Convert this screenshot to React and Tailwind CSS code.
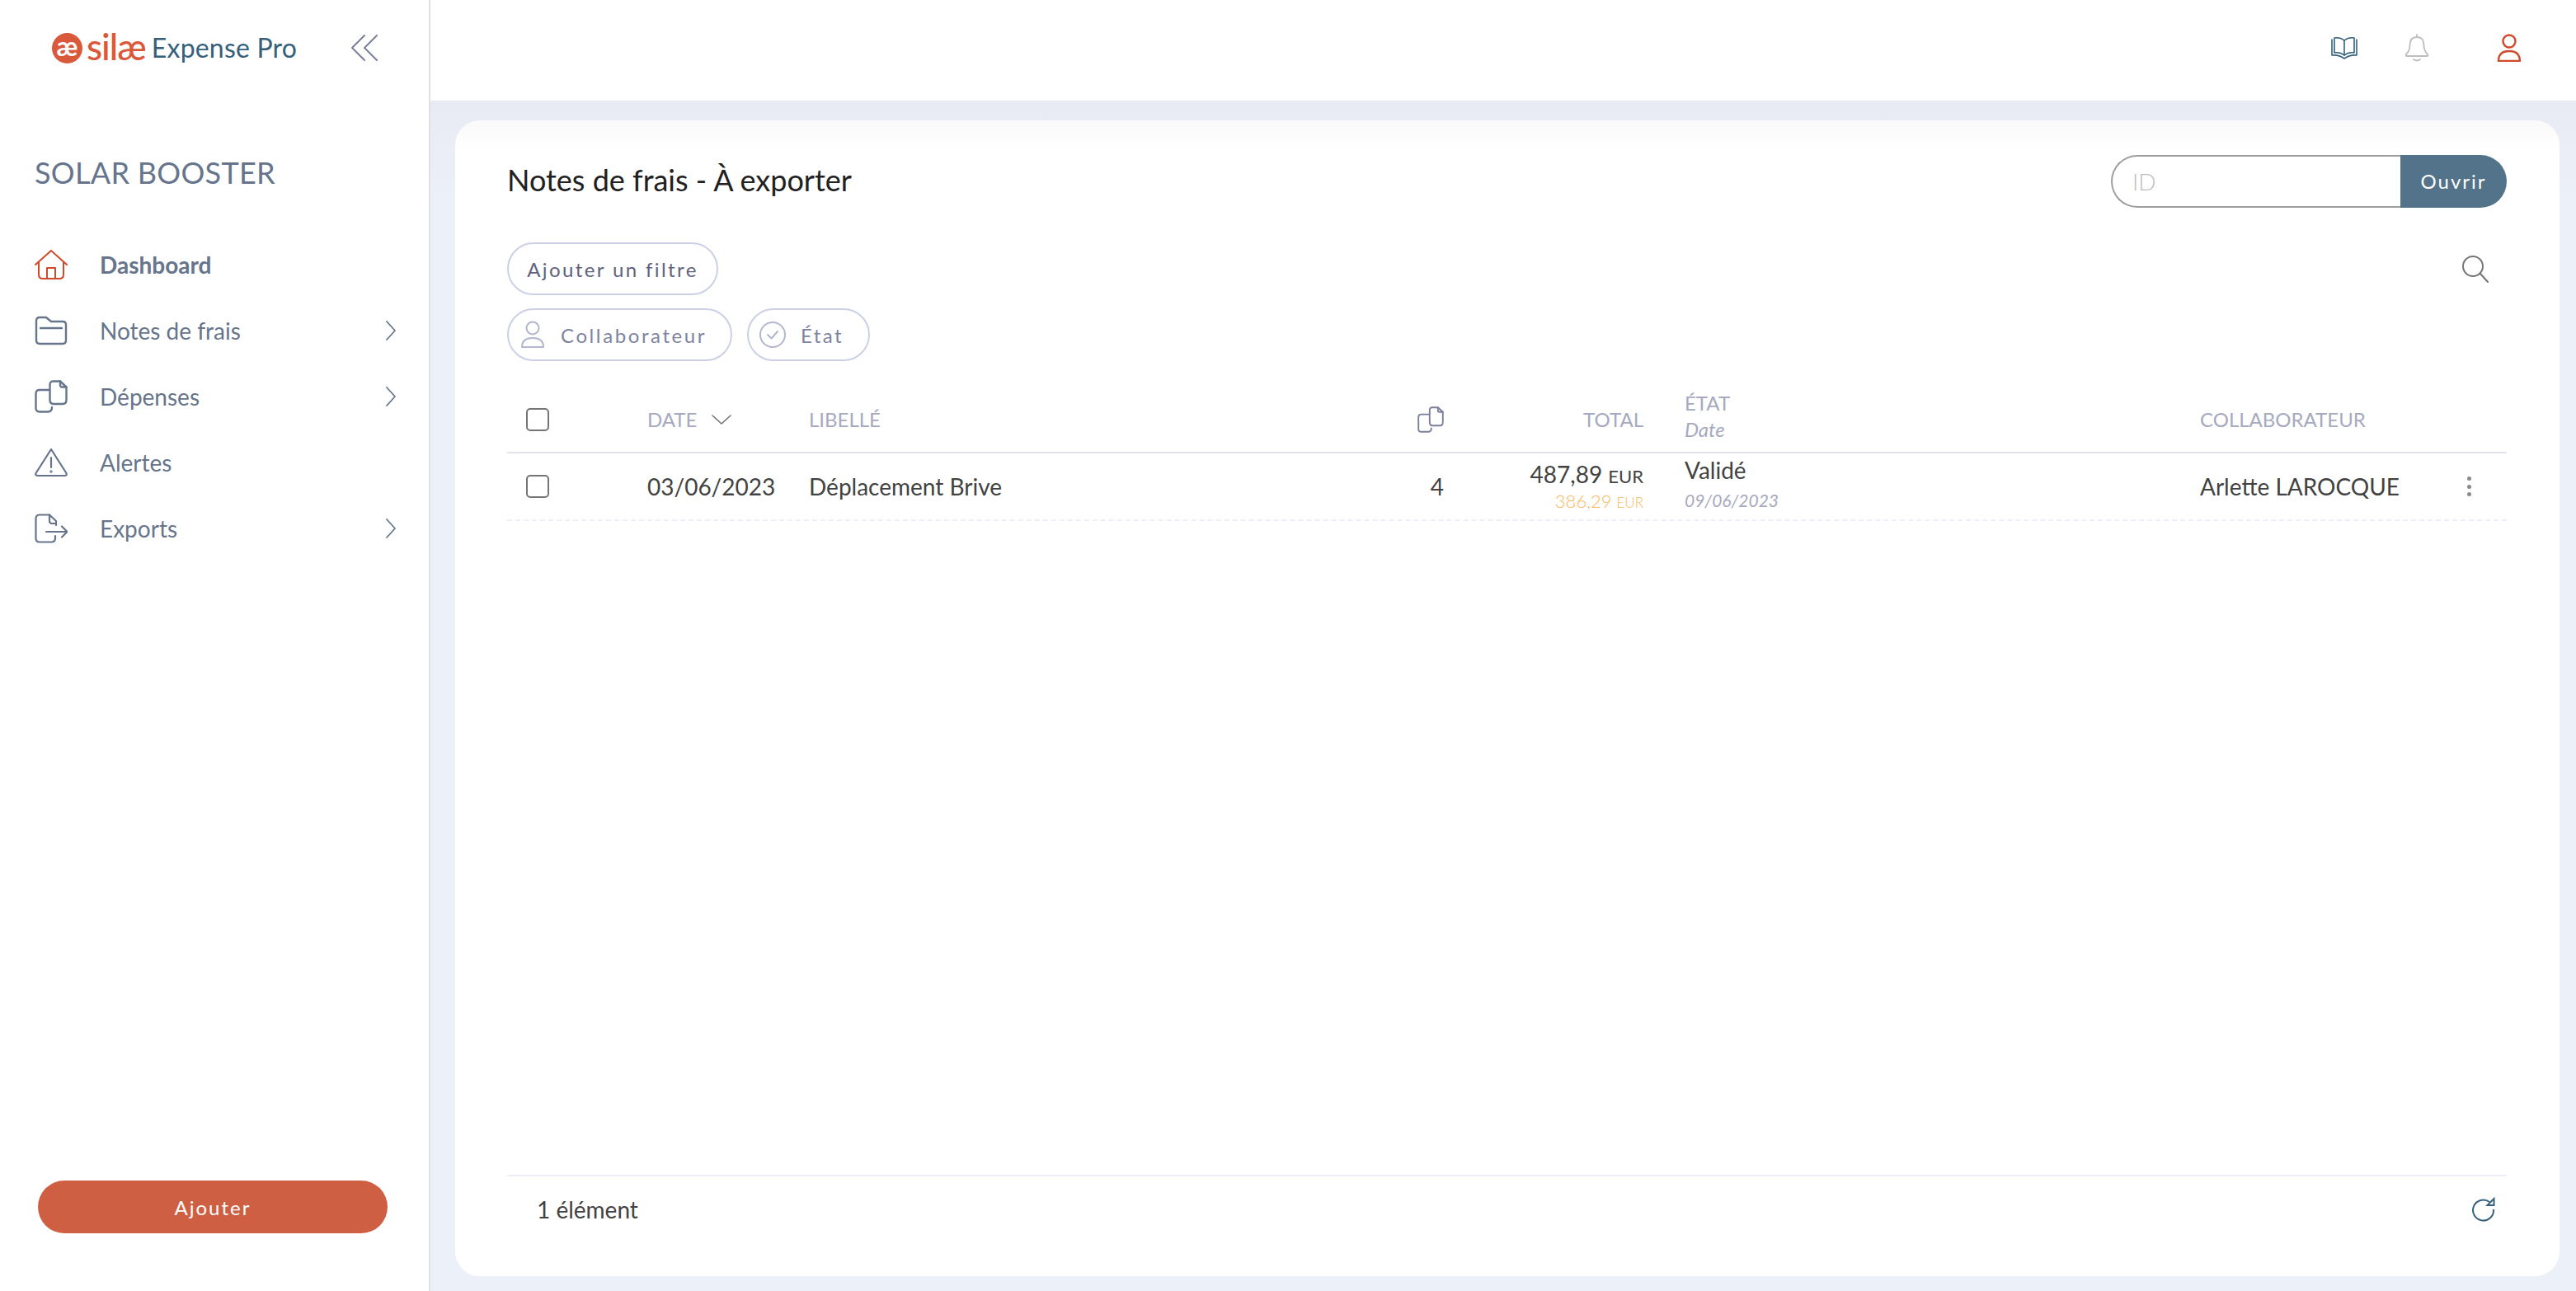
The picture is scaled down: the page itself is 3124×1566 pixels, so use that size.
const S = { fill: "none", stroke: "currentColor", strokeWidth: 2, strokeLinecap: "round", strokeLinejoin: "round" };

const Home = () => (
  <svg width="40" height="36" viewBox="0 0 40 36" {...S}>
    <path d="M1 18 L20 1 L39 18" />
    <path d="M5 15 V30 Q5 35 10 35 H30 Q35 35 35 30 V15" />
    <path d="M15 35 V22 H25 V35" />
  </svg>
);
const Folder = () => (
  <svg width="40" height="36" viewBox="0 0 40 36" {...S} strokeWidth="2.4">
    <path d="M2 30 V6 Q2 2 6 2 H14 L20 7 H34 Q38 7 38 11 V30 Q38 34 34 34 H6 Q2 34 2 30 Z" />
    <path d="M7 15 H33" />
  </svg>
);
const Copies = ({ w = 40, h = 40 }) => (
  <svg width={w} height={h} viewBox="0 0 40 40" {...S} strokeWidth="2.4">
    <path d="M22 1.5 H31 L38.5 8.5 V24 Q38.5 29 34 29 H23 Q18.5 29 18.5 24 V6 Q18.5 1.5 22 1.5 Z" />
    <path d="M31 1.5 V6 Q31 8.5 33.5 8.5 H38.5" />
    <path d="M17 12 H6 Q1.5 12 1.5 16.5 V34 Q1.5 38.5 6 38.5 H16 Q21 38.5 21 33" />
  </svg>
);
const Warn = () => (
  <svg width="40" height="36" viewBox="0 0 40 36" {...S} strokeWidth="2.2">
    <path d="M20 2 L38.5 31 Q39.5 34 36 34 H4 Q0.5 34 1.5 31 Z" />
    <path d="M20 12 V24" />
    <circle cx="20" cy="29" r="0.6" />
  </svg>
);
const Export = () => (
  <svg width="40" height="36" viewBox="0 0 40 36" {...S} strokeWidth="2.2">
    <path d="M18 1.5 H6 Q1.5 1.5 1.5 6 V30 Q1.5 34.5 6 34.5 H20 Q25 34.5 25 30 V27" />
    <path d="M18 1.5 L26 9 V14 M18 1.5 V9 Q18 12 21 12 H26" />
    <path d="M14 22 H39 M33 15.5 L39.5 22 L33 28.5" />
  </svg>
);
const ChevronR = () => (
  <svg className="text-[#66758c]" width="12" height="24" viewBox="0 0 12 24" {...S} strokeWidth="1.8"><path d="M1 1 L11 12 L1 23" /></svg>
);

const NavItem = ({ icon, label, active, chevron }) => (
  <div className="flex items-center h-20 pl-[42px] pr-[40px]">
    <span className={active ? "w-10 flex justify-center text-[#cf4a2a]" : "w-10 flex justify-center text-[#66758c]"}>{icon}</span>
    <span className={active ? "ml-[39px] flex-1 text-[28px] font-bold text-[#66758c]" : "ml-[39px] flex-1 text-[28px] text-[#66758c]"}>{label}</span>
    {chevron && <ChevronR />}
  </div>
);

const Head = ({ className = "", children }) => (
  <div className={"text-[24px] leading-[32px] text-[#a6a9bf] " + className}>{children}</div>
);

export default function App() {
  return (
    <div className="flex w-[3124px] h-[1566px] overflow-hidden bg-white font-[Lato,sans-serif]">
      {/* Sidebar */}
      <aside className="w-[522px] h-full flex flex-col border-r-2 border-[#e0e0e0] bg-white">
        <div className="flex items-center h-[116px] pl-[63px]">
          <span className="w-[37px] h-[37px] rounded-full bg-[#d9593a] text-white flex items-center justify-center text-[32px] leading-none font-bold pb-[4px]">æ</span>
          <span className="ml-[5px] text-[44px] leading-none text-[#d9593a] pb-[5px] font-medium tracking-[-1px]">silæ</span>
          <span className="ml-[7px] text-[32px] tracking-[0.2px] leading-none text-[#34607c] whitespace-nowrap">Expense Pro</span>
          <span className="ml-[66px] text-[#7b7f9c]">
            <svg width="32" height="32" viewBox="0 0 32 32" {...S}><path d="M16 1 L1 16 L16 31 M31 1 L16 16 L31 31" /></svg>
          </span>
        </div>
        <div className="pl-[42px] mt-[68px] text-[36px] leading-[50px] tracking-[0.3px] text-[#66758c]">SOLAR BOOSTER</div>
        <nav className="mt-[47px] flex flex-col">
          <NavItem icon={<Home />} label="Dashboard" active />
          <NavItem icon={<Folder />} label="Notes de frais" chevron />
          <NavItem icon={<Copies />} label="Dépenses" chevron />
          <NavItem icon={<Warn />} label="Alertes" />
          <NavItem icon={<Export />} label="Exports" chevron />
        </nav>
        <div className="mt-auto pl-[46px] pb-[70px]">
          <button className="w-[424px] h-[64px] pt-[2px] rounded-full bg-[#cf5f42] text-white text-[24px] tracking-[2px]">Ajouter</button>
        </div>
      </aside>

      {/* Main */}
      <main className="flex-1 flex flex-col min-w-0 bg-linear-to-b from-[#e5e6f0] to-[#ecf0f8] to-[16%]">
        <header className="h-[122px] bg-white flex items-center justify-end shrink-0 relative">
          <div className="flex items-center pr-[66px] pb-[6px]">
            <span className="text-[#34607c]">
              <svg width="34" height="28" viewBox="0 0 34 28" {...S} strokeWidth="1.6">
                <path d="M2 4 V23 Q10 22 17 27 Q24 22 32 23 V4" />
                <path d="M5 2 Q12 1 17 5 Q22 1 29 2 V20 Q22 19 17 23 Q12 19 5 20 Z" />
                <path d="M17 5 V23" />
              </svg>
            </span>
            <span className="ml-[56px] text-[#bdbdbd]">
              <svg width="30" height="34" viewBox="0 0 30 34" {...S} strokeWidth="1.8">
                <path d="M15 1 V4 M15 4 C8 4 6.5 9 6.5 14 C6.5 20 4 23 2 25 Q1 27 3 27 H27 Q29 27 28 25 C26 23 23.5 20 23.5 14 C23.5 9 22 4 15 4 Z" />
                <path d="M11 31 Q15 34 19 31" />
              </svg>
            </span>
            <span className="ml-[82px] text-[#cf4a2a]">
              <svg width="30" height="34" viewBox="0 0 30 34" {...S} strokeWidth="2.4">
                <circle cx="15" cy="9" r="7.5" />
                <path d="M2 33 H28 Q28 21 15 21 Q2 21 2 33 Z" />
              </svg>
            </span>
          </div>
        </header>

        <div className="flex-1 min-h-0 pt-[24px] pl-[30px] pr-[20px] pb-[18px]">
          <section className="h-full rounded-[30px] bg-linear-to-b from-[#fafafa] to-white to-[40px] flex flex-col pl-[63px] pr-[64px]">
            {/* title row */}
            <div className="flex items-center justify-between pt-[42px] h-[106px] shrink-0">
              <h1 className="text-[36px] leading-[44px] text-[#212121] font-normal pb-[4px]">Notes de frais - À exporter</h1>
              <div className="flex h-[64px] w-[480px]">
                <input placeholder="ID" className="w-[351px] h-full rounded-l-full border-2 border-r-0 border-[#9e9e9e] pl-[24px] text-[28px] font-light bg-white outline-none placeholder:text-[#bdbdbd]" />
                <button className="flex-1 h-full rounded-r-full bg-[#527389] text-white text-[24px] tracking-[2px]">Ouvrir</button>
              </div>
            </div>

            {/* filters */}
            <div className="flex items-center justify-between mt-[42px]">
              <button className="w-[256px] h-[64px] pt-[2px] rounded-full border-2 border-[#cbd0e6] text-[24px] tracking-[2.4px] text-[#5f6380]">Ajouter un filtre</button>
              <span className="text-[#757575] pr-[21px]">
                <svg width="34" height="34" viewBox="0 0 34 34" {...S}>
                  <circle cx="14" cy="14" r="12" />
                  <path d="M23 23 L32 33" />
                </svg>
              </span>
            </div>
            <div className="flex items-center gap-[18px] mt-[16px]">
              <div className="flex items-center h-[64px] w-[273px] rounded-full border-2 border-[#cbd0e6] pl-[14px]">
                <span className="text-[#b2b6cf]">
                  <svg width="30" height="34" viewBox="0 0 30 34" {...S}>
                    <circle cx="15" cy="9" r="7.5" />
                    <path d="M2 32 H28 Q28 21 15 21 Q2 21 2 32 Z" />
                  </svg>
                </span>
                <span className="ml-[19px] pt-[2px] text-[24px] tracking-[2.6px] text-[#7e839f]">Collaborateur</span>
              </div>
              <div className="flex items-center h-[64px] w-[149px] rounded-full border-2 border-[#cbd0e6] pl-[12px]">
                <span className="text-[#b2b6cf]">
                  <svg width="34" height="34" viewBox="0 0 34 34" {...S}>
                    <circle cx="17" cy="17" r="15" />
                    <path d="M11 17 L15.5 21.5 L23 13" />
                  </svg>
                </span>
                <span className="ml-[17px] pt-[2px] text-[24px] tracking-[2.4px] text-[#7e839f]">État</span>
              </div>
            </div>

            {/* table header */}
            <div className="grid grid-cols-[170px_196px_670px_100px_242px_675px_291px_79px] items-center h-[80px] mt-[32px] border-b-2 border-[#e3e3ec] shrink-0">
              <div className="pl-[23px]"><div className="w-[28px] h-[28px] rounded-[5px] border-2 border-[#757575]" /></div>
              <Head className="flex items-center">DATE
                <svg className="ml-[18px] text-[#757575]" width="24" height="12" viewBox="0 0 24 12" {...S} strokeWidth="1.6"><path d="M1 1 L12 11 L23 1" /></svg>
              </Head>
              <Head>LIBELLÉ</Head>
              <div className="flex justify-end text-[#7b7f9c]"><Copies w={32} h={32} /></div>
              <Head className="text-right">TOTAL</Head>
              <div className="pl-[50px] pb-[9px]">
                <Head>ÉTAT</Head>
                <Head className="italic">Date</Head>
              </div>
              <Head>COLLABORATEUR</Head>
              <div />
            </div>

            {/* row */}
            <div className="grid grid-cols-[170px_196px_670px_100px_242px_675px_291px_79px] items-center h-[82px] border-b-2 border-dashed border-[#eeedfb] text-[28px] text-[#424242] shrink-0">
              <div className="pl-[23px]"><div className="w-[28px] h-[28px] rounded-[5px] border-2 border-[#757575]" /></div>
              <div>03/06/2023</div>
              <div>Déplacement Brive</div>
              <div className="text-right">4</div>
              <div className="text-right">
                <div className="leading-[32px] pb-[2px]">487,89 <span className="text-[22px]">EUR</span></div>
                <div className="leading-[24px] text-[22px] font-light text-[#fbb860]">386,29 <span className="text-[17px]">EUR</span></div>
              </div>
              <div className="pl-[50px]">
                <div className="leading-[32px] pb-[8px] -mt-[7px]">Validé</div>
                <div className="leading-[26px] text-[21px] italic text-[#a6a9bf]">09/06/2023</div>
              </div>
              <div>Arlette LAROCQUE</div>
              <div className="flex flex-col items-center gap-[4.5px] w-[70px]">
                <span className="w-[5px] h-[5px] rounded-full bg-[#8a8a8a]" />
                <span className="w-[5px] h-[5px] rounded-full bg-[#8a8a8a]" />
                <span className="w-[5px] h-[5px] rounded-full bg-[#8a8a8a]" />
              </div>
            </div>

            {/* footer */}
            <div className="mt-auto mb-[30px] h-[93px] border-t-2 border-[#eeedfb] flex items-center justify-between pl-[36px] pr-[13px] pb-[12px] shrink-0">
              <span className="text-[28px] text-[#424242]">1 élément</span>
              <span className="text-[#34607c]">
                <svg width="30" height="30" viewBox="0 0 30 30" {...S} strokeLinecap="butt">
                  <path d="M27 15 A 12.5 12.5 0 1 1 22 6" />
                  <path d="M27.5 2 V10 H19.5 Z" strokeLinejoin="miter" />
                </svg>
              </span>
            </div>
          </section>
        </div>
      </main>
    </div>
  );
}
